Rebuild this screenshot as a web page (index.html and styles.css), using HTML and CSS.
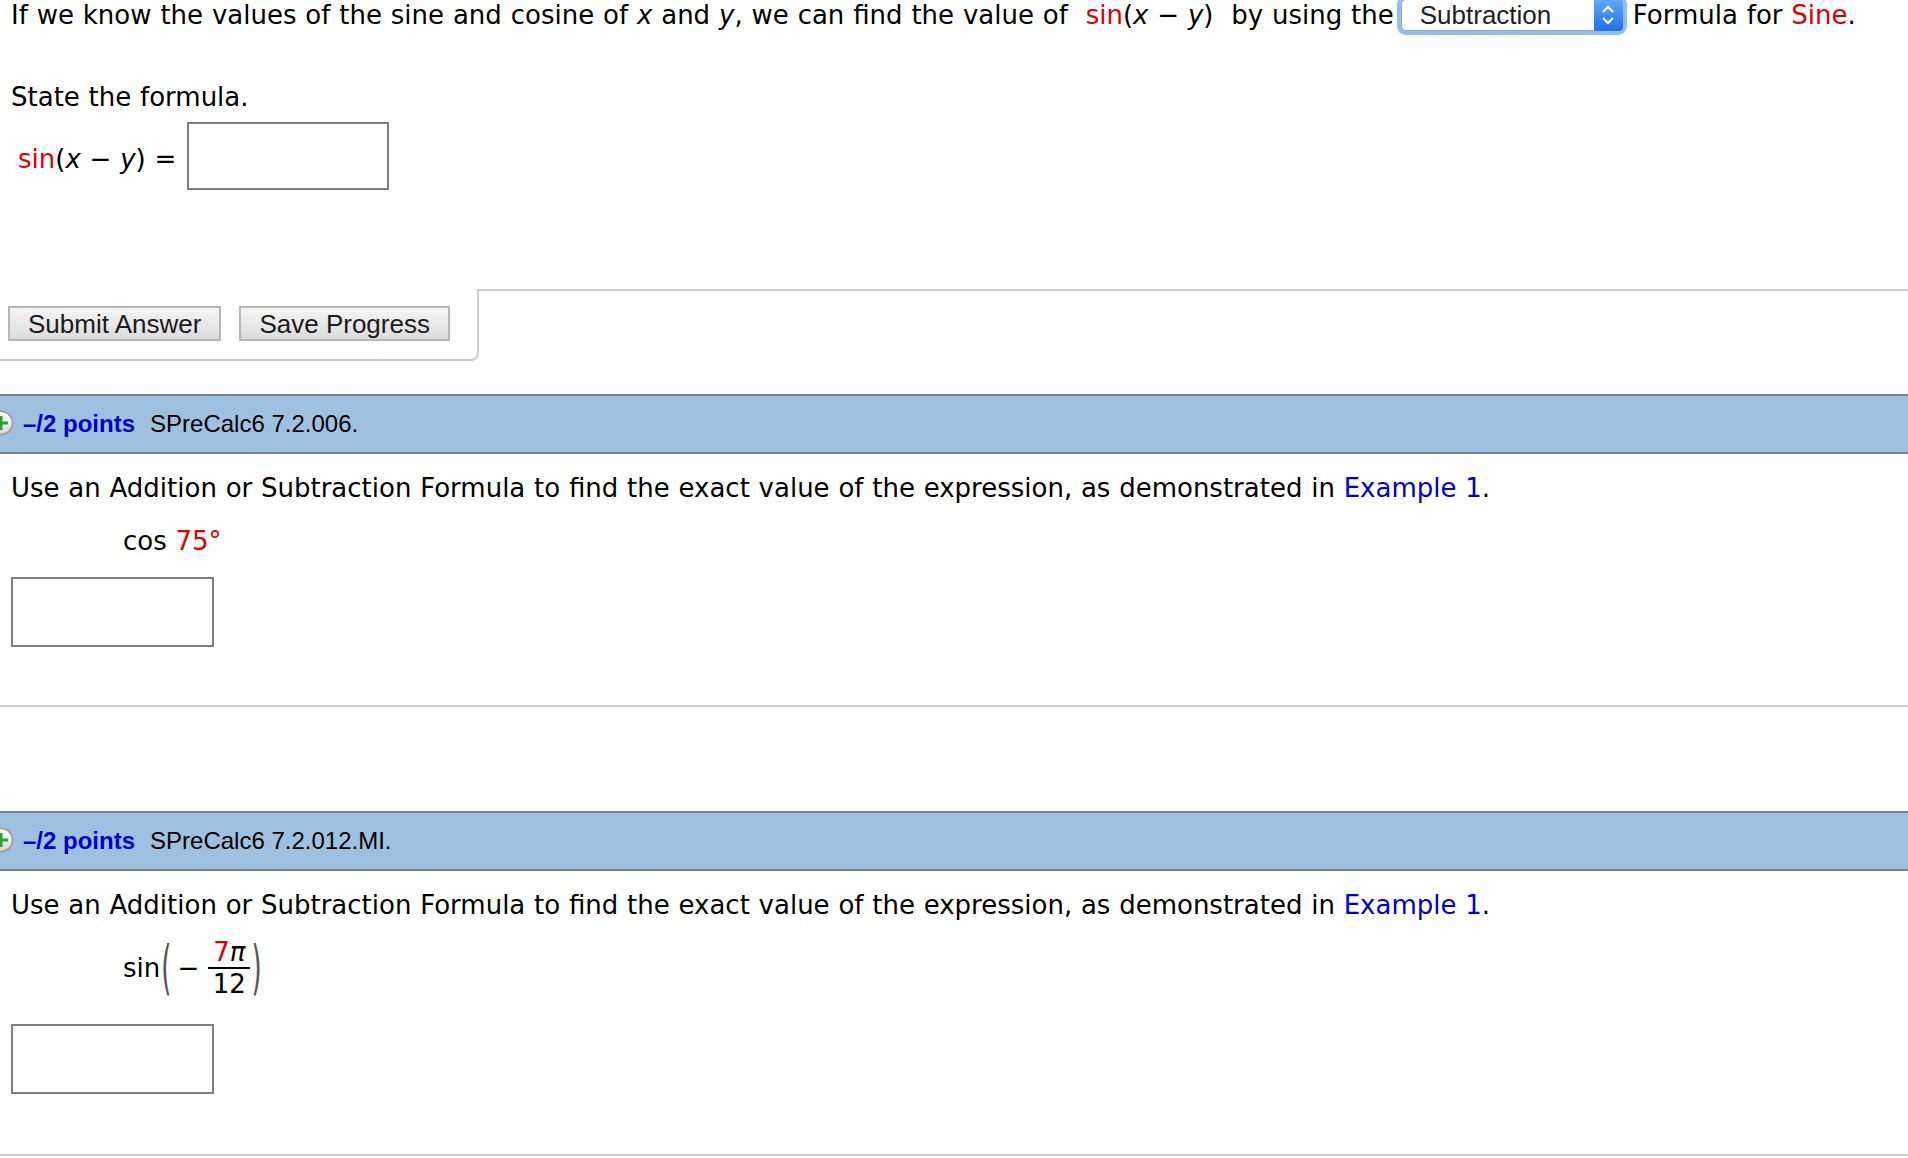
FILE: index.html
```html
<!DOCTYPE html>
<html lang="en">
  <head>
    <meta charset="UTF-8" />
    <meta name="viewport" content="width=device-width, initial-scale=1.0" />
    <title>SPreCalc6 7.2 Assignment</title>
    <link rel="stylesheet" href="styles.css">
  </head>
  <body>
    <div class="qbody">
      <p class="lead">If we know the values of the sine and cosine of <i>x</i> and <i>y</i>, we can find the value of&nbsp; <span class="red">sin</span>(<i>x</i> − <i>y</i>)&nbsp; by using the<span class="choice"><span class="choice-label">Subtraction</span><span class="choice-arrow"><svg width="28" height="32" viewBox="0 0 28 32"><path d="M9 13 L14 8 L19 13" fill="none" stroke="#fff" stroke-width="2.2"/><path d="M9 19 L14 24 L19 19" fill="none" stroke="#fff" stroke-width="2.2"/></svg></span></span>Formula for <span class="red">Sine</span>.</p>
      <p class="state">State the formula.</p>
      <div class="formula">
        <span class="formula-label"><span class="red">sin</span>(<i>x</i> − <i>y</i>) =</span>
        <span class="answer"></span>
      </div>
    </div>

    <div class="actions">
      <div class="buttons">
        <button class="btn">Submit Answer</button>
        <button class="btn">Save Progress</button>
      </div>
      <div class="filler"></div>
    </div>

    <div class="bar">
      <svg class="expand" width="26" height="26" viewBox="0 0 26 26">
        <defs>
          <linearGradient id="g1" x1="0" y1="0" x2="0" y2="1">
            <stop offset="0" stop-color="#ffffff"/>
            <stop offset="1" stop-color="#d6d6d6"/>
          </linearGradient>
        </defs>
        <circle cx="13" cy="13" r="11.5" fill="url(#g1)" stroke="#9a9a9a" stroke-width="1.5"/>
        <rect x="6" y="11.5" width="14" height="3" fill="#2f9e2f"/>
        <rect x="11.5" y="6" width="3" height="14" fill="#2f9e2f"/>
      </svg>
      <span class="points">–/2 points</span>
      <span class="code">SPreCalc6 7.2.006.</span>
    </div>

    <div class="qbody">
      <p class="prompt">Use an Addition or Subtraction Formula to find the exact value of the expression, as demonstrated in <a class="link" href="#">Example 1</a>.</p>
      <p class="expr">cos <span class="red">75°</span></p>
      <div class="answer answer-block"></div>
    </div>
    <div class="sep sep-mid"></div>

    <div class="bar bar-second">
      <svg class="expand" width="26" height="26" viewBox="0 0 26 26">
        <circle cx="13" cy="13" r="11.5" fill="url(#g1)" stroke="#9a9a9a" stroke-width="1.5"/>
        <rect x="6" y="11.5" width="14" height="3" fill="#2f9e2f"/>
        <rect x="11.5" y="6" width="3" height="14" fill="#2f9e2f"/>
      </svg>
      <span class="points">–/2 points</span>
      <span class="code">SPreCalc6 7.2.012.MI.</span>
    </div>

    <div class="qbody">
      <p class="prompt">Use an Addition or Subtraction Formula to find the exact value of the expression, as demonstrated in <a class="link" href="#">Example 1</a>.</p>
      <div class="expr expr-frac">
        <span>sin</span>
        <span class="paren">(</span>
        <span class="minus">−</span>
        <span class="frac">
          <span class="num"><span class="red">7</span><i>π</i></span>
          <span class="den">12</span>
        </span>
        <span class="paren">)</span>
      </div>
      <div class="answer answer-last"></div>
    </div>
    <div class="sep sep-end"></div>
  </body>
</html>
```

FILE: styles.css
```css
body {
  margin: 0;
  font-family: "DejaVu Sans", Verdana, sans-serif;
  font-size: 26px;
  word-spacing: 0.5px;
  color: #000;
  background: #fff;
}

p {
  margin: 0;
  line-height: 30px;
}

.red {
  color: #dd0000;
}

.qbody {
  padding: 0 11px;
}

.lead {
  white-space: nowrap;
  word-spacing: 0.6px;
}

.choice {
  display: inline-flex;
  height: 32px;
  box-sizing: border-box;
  margin: -6px 10px 0 7px;
  border: 1px solid #a7a7a7;
  border-radius: 5px;
  background: #fff;
  box-shadow: 0 0 0 4px #91bff2;
  font-family: "Liberation Sans", Arial, sans-serif;
  font-size: 26px;
  line-height: 30px;
  word-spacing: 0;
  color: #222;
}

.choice-label {
  width: 174px;
  padding-left: 18px;
}

.choice-arrow {
  width: 29px;
  background: linear-gradient(#62aaf9, #1d72e6);
  border-radius: 0 4px 4px 0;
  margin: -1px -1px -1px 0;
}

.choice-arrow svg {
  display: block;
}

.state {
  margin-top: 51px;
}

.formula {
  display: flex;
  align-items: center;
  gap: 11px;
  margin: 10px 0 0 7px;
}

.formula-label {
  margin-top: 5px;
  line-height: 30px;
}

.answer {
  display: block;
  width: 202px;
  height: 68px;
  box-sizing: border-box;
  border: 2px solid #808080;
  background: #fff;
}

.actions {
  display: flex;
  margin-top: 99px;
}

.buttons {
  display: flex;
  gap: 18px;
  width: 479px;
  height: 72px;
  box-sizing: border-box;
  padding: 17px 0 0 8px;
  border-right: 2px solid #cccccc;
  border-bottom: 2px solid #cccccc;
  border-bottom-right-radius: 8px;
}

.btn {
  height: 35px;
  padding: 0 18px;
  border: 2px solid #b7b7b7;
  background: linear-gradient(#f5f5f5, #dcdcdc);
  font-family: "Liberation Sans", Arial, sans-serif;
  font-size: 26px;
  line-height: 30px;
  word-spacing: 0;
  color: #1b1b1b;
}

.filler {
  flex: 1;
  border-top: 2px solid #cccccc;
}

.bar {
  display: flex;
  align-items: center;
  height: 56px;
  margin-top: 33px;
  background: #9dc1de;
  border-top: 2px solid #6d8698;
  border-bottom: 2px solid #6d8698;
  font-family: "Liberation Sans", Arial, sans-serif;
  word-spacing: 0;
}

.bar-second {
  margin-top: 104px;
}

.expand {
  margin-left: -12px;
  margin-right: 9px;
  margin-top: -2px;
}

.points {
  color: #0000cc;
  font-weight: bold;
  font-size: 24px;
  margin-right: 15px;
}

.code {
  font-size: 24px;
}

.prompt {
  margin-top: 19px;
}

.link {
  color: #0000cc;
  text-decoration: none;
}

.expr {
  margin-top: 23px;
  padding-left: 112px;
}

.answer-block {
  width: 203px;
  height: 70px;
  margin-top: 21px;
}

.sep {
  height: 2px;
  background: #cccccc;
}

.sep-mid {
  margin-top: 58px;
}

.expr-frac {
  display: flex;
  align-items: center;
  height: 60px;
  margin-top: 18px;
}

.paren {
  display: inline-block;
  color: #555;
  transform: scale(1, 2.25);
  margin: 0 2px 0 1px;
}

.minus {
  margin: 0 9px 0 4px;
}

.frac {
  display: inline-flex;
  flex-direction: column;
  align-items: center;
  line-height: 28px;
}

.num {
  padding: 0 5px 1px;
  border-bottom: 2px solid #000;
}

.den {
  padding-top: 1px;
}

.answer-last {
  width: 203px;
  height: 70px;
  margin-top: 26px;
}

.sep-end {
  margin-top: 60px;
}
```
